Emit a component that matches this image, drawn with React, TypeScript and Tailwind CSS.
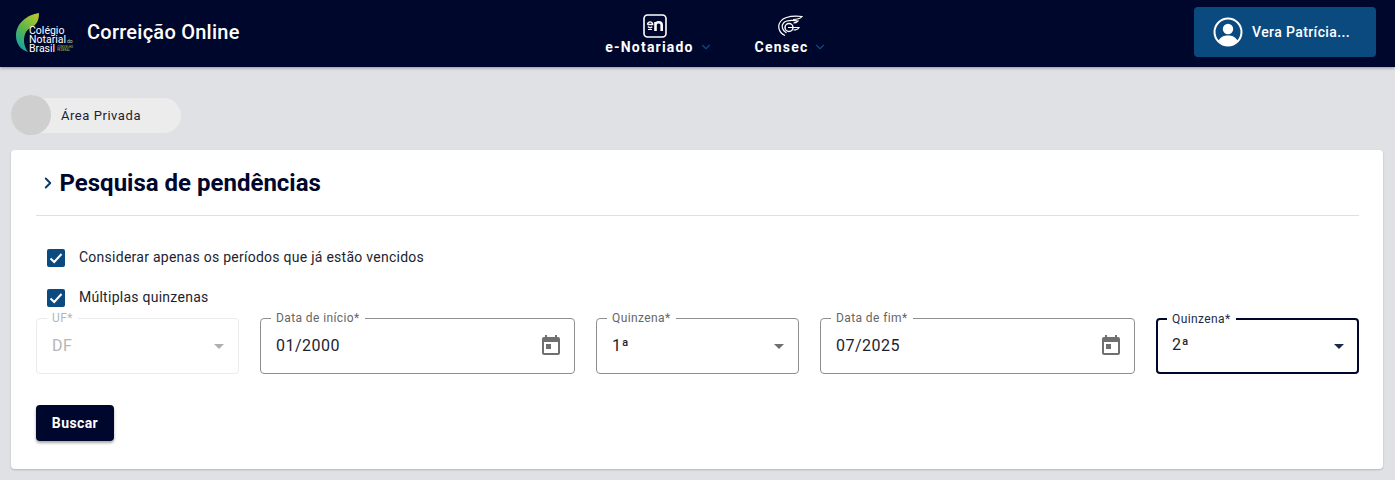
import React from "react";
import { ChevronDown, ChevronRight } from "lucide-react";

function Logo() {
  return (
    <div className="relative mt-[3px] h-[42px] w-[66px] shrink-0">
      <svg width="40" height="42" viewBox="0 0 40 42" className="absolute left-0 top-0">
        <defs>
          <linearGradient id="arc" x1="0.8" y1="0" x2="0.3" y2="1">
            <stop offset="0" stopColor="#b5c92d" />
            <stop offset="0.5" stopColor="#5fb548" />
            <stop offset="1" stopColor="#12a3a8" />
          </linearGradient>
        </defs>
        <path d="M24 1 C12 3 1 11 1 24 C1 32 6 38 13 40 C10 36 8 30 9.5 24 C11 17 16 16 20 13 C23 10 24 6 24 1 Z" fill="url(#arc)" />
      </svg>
      <div className="absolute left-[14px] top-[14px] font-['Roboto',sans-serif] text-[10.5px] leading-[9px] text-white">
        <div>Colégio</div>
        <div className="flex items-baseline gap-px">
          Notarial<span className="text-[5px] leading-[5px] text-[#cfd3a0]">do</span>
        </div>
        <div className="flex items-end gap-0.5">
          Brasil
          <span className="pb-px text-[3px] leading-[3px] tracking-wide text-[#b5c92d]">
            CONSELHO
            <br />
            FEDERAL
          </span>
        </div>
      </div>
    </div>
  );
}

function ENotariadoIcon() {
  return (
    <svg width="24" height="24" viewBox="0 0 24 24" fill="none">
      <rect x="1" y="1" width="22" height="22" rx="3.5" stroke="white" strokeWidth="1.6" />
      <path d="M4.5 10.5 a2.6 2.6 0 1 1 5.2 0 H4.5 M5 12.5 a3 3 0 0 0 4.2 .3" stroke="white" strokeWidth="1.4" />
      <path d="M5 15.5 H9" stroke="white" strokeWidth="1" />
      <path d="M12.5 17 V8 M12.5 10.5 C13 8 18.7 7 18.7 11 V17" stroke="white" strokeWidth="2.6" />
    </svg>
  );
}

function CensecIcon() {
  return (
    <svg width="26" height="22" viewBox="0 0 26 22" fill="none" stroke="white">
      <path d="M8 20.5 C2 18 0 11 3.5 6.5 C7 2 14 0.5 25 1.5 C23 4 20 4.5 16 4.5" strokeWidth="1.2" />
      <path d="M9.5 18 C5 15.5 4 10.5 6.5 8 C9 5.5 15 5 21 6 C19.5 7.5 18 8 16.5 8" strokeWidth="1.2" />
      <circle cx="12" cy="12.5" r="4" strokeWidth="1.5" />
      <path d="M11 12.5 H22 C21 14.5 19 15 16.5 15" strokeWidth="1.2" />
    </svg>
  );
}

function NavItem({
  label,
  icon,
  width,
  iconPad,
}: {
  label: string;
  icon: React.ReactNode;
  width: string;
  iconPad: string;
}) {
  return (
    <div className={`flex flex-col items-center ${width}`}>
      <div className={`flex h-[26px] items-center ${iconPad}`}>{icon}</div>
      <div className="mt-[-2px] flex items-center gap-[5px] text-sm font-bold leading-[20px] tracking-[1.2px] text-white">
        {label}
        <ChevronDown size={14} className="text-[#0a4a7f]" strokeWidth={2} />
      </div>
    </div>
  );
}

function UserIcon() {
  return (
    <svg width="30" height="30" viewBox="0 0 30 30">
      <circle cx="15" cy="15" r="13.5" fill="none" stroke="white" strokeWidth="2" />
      <circle cx="15" cy="12" r="5.2" fill="white" />
      <path d="M5.5 23.5 C8 19.5 11 18.5 15 18.5 C19 18.5 22 19.5 24.5 23.5 C22 27 18.5 28.5 15 28.5 C11.5 28.5 8 27 5.5 23.5 Z" fill="white" />
    </svg>
  );
}

function Check({ label }: { label: string }) {
  return (
    <label className="flex h-[18px] items-center gap-[14px] pl-[11px]">
      <span className="flex h-[18px] w-[18px] items-center justify-center rounded-[2px] bg-[#0a4a7f]">
        <svg width="16" height="16" viewBox="0 0 16 16" fill="none">
          <path d="M2.5 8.5 L6.2 12 L13.5 4" stroke="white" strokeWidth="2" />
        </svg>
      </span>
      <span className="-mt-[2px] text-sm leading-[18px] tracking-[0.26px] text-[#1c2330]">{label}</span>
    </label>
  );
}

function CalendarIcon() {
  return (
    <svg width="24" height="24" viewBox="0 0 24 24" fill="#6f6f6f" className="-mr-px -mt-[2px]">
      <path d="M19 4h-1V2h-2v2H8V2H6v2H5c-1.1 0-2 .9-2 2v14c0 1.1.9 2 2 2h14c1.1 0 2-.9 2-2V6c0-1.1-.9-2-2-2zm0 16H5V9h14v11zM7 11h5v5H7z" />
    </svg>
  );
}

function Field({
  label,
  value,
  kind,
  disabled,
  focused,
}: {
  label: string;
  value: string;
  kind: "select" | "date";
  disabled?: boolean;
  focused?: boolean;
}) {
  const border = disabled
    ? "border border-[#ebebeb]"
    : focused
      ? "border-2 border-[#00072d]"
      : "border border-[#8f8f8f]";
  return (
    <div className={`relative flex h-14 items-center justify-between rounded ${focused ? "pl-[14px] pr-[11px]" : "pl-[15px] pr-[12px]"} ${border}`}>
      <span
        className={`absolute -top-2 bg-white px-[5px] text-xs leading-[14px] tracking-[0.4px] ${focused ? "left-[9px]" : "left-[10px]"} ${
          disabled ? "text-[#b5b5b5]" : focused ? "text-[#1b2a4a]" : "text-[#666666]"
        }`}
      >
        {label}
      </span>
      <span
        className={`text-base leading-5 tracking-[0.5px] ${disabled ? "text-[#b5b5b5]" : "text-[#1c2330]"} ${
          focused ? "-mt-[2px]" : ""
        }`}
      >
        {value}
      </span>
      {kind === "date" ? (
        <CalendarIcon />
      ) : (
        <span
          className={`mr-[2px] h-0 w-0 border-x-[5px] border-t-[5px] border-x-transparent ${
            disabled ? "border-t-[#b0b0b0]" : focused ? "border-t-[#1b2a4a]" : "border-t-[#6f6f6f]"
          }`}
        />
      )}
    </div>
  );
}

export default function App() {
  return (
    <div className="h-[480px] overflow-hidden bg-[#e0e1e5] font-['Roboto',sans-serif]">
      <header className="relative flex h-[67px] items-center justify-between bg-[#00072d] pb-1 pl-[15px] pr-[19px] shadow-[0_1px_3px_rgba(0,0,0,0.35)]">
        <div className="flex items-center gap-[6px]">
          <Logo />
          <span className="text-xl font-medium leading-6 tracking-[0.25px] text-white">Correição Online</span>
        </div>
        <nav className="absolute left-[598px] top-[13px] flex gap-4">
          <NavItem label="e-Notariado" icon={<ENotariadoIcon />} width="w-[122px]" iconPad="pr-2" />
          <NavItem label="Censec" icon={<CensecIcon />} width="w-[110px]" iconPad="pr-[2px]" />
        </nav>
        <button className="flex h-[50px] w-[182px] items-center gap-[9px] rounded bg-[#0a4a7f] pl-[19px] text-sm font-medium tracking-[0.4px] text-white">
          <UserIcon />
          Vera Patrícia...
        </button>
      </header>

      <main className="px-[11px]">
        <div className="mt-[28px] flex h-10 items-center">
          <div className="flex h-[35px] w-[170px] items-center rounded-full bg-[#ececed]">
            <span className="h-10 w-10 shrink-0 rounded-full bg-[#cfcfcf]" />
            <span className="ml-[10px] mt-[2px] text-[13px] tracking-[0.55px] text-[#1c2330]">Área Privada</span>
          </div>
        </div>

        <section className="mt-[15px] h-[319px] w-[1372px] rounded bg-white pl-[25px] pr-[24px] shadow-[0_1px_2px_rgba(0,0,0,0.2)]">
          <div className="flex h-[66px] items-center border-b border-[#e0e0e0]">
            <ChevronRight size={18} strokeWidth={2.5} className="ml-[3px] text-[#0a3a66]" />
            <h1 className="ml-[2.5px] text-2xl font-bold leading-7 text-[#00072d]">Pesquisa de pendências</h1>
          </div>
          <div className="mt-[33px] flex flex-col gap-[22px]">
            <Check label="Considerar apenas os períodos que já estão vencidos" />
            <Check label="Múltiplas quinzenas" />
          </div>
          <div className="mt-[11px] grid grid-cols-[203px_315px_203px_315px_203px] gap-x-[21px]">
            <Field label="UF*" value="DF" kind="select" disabled />
            <Field label="Data de início*" value="01/2000" kind="date" />
            <Field label="Quinzena*" value="1ª" kind="select" />
            <Field label="Data de fim*" value="07/2025" kind="date" />
            <Field label="Quinzena*" value="2ª" kind="select" focused />
          </div>
          <button className="mt-[31px] h-9 w-[78px] rounded bg-[#00072d] text-sm font-bold tracking-[0.4px] text-white shadow-[0_2px_3px_rgba(0,0,0,0.35)]">
            Buscar
          </button>
        </section>
      </main>
    </div>
  );
}
